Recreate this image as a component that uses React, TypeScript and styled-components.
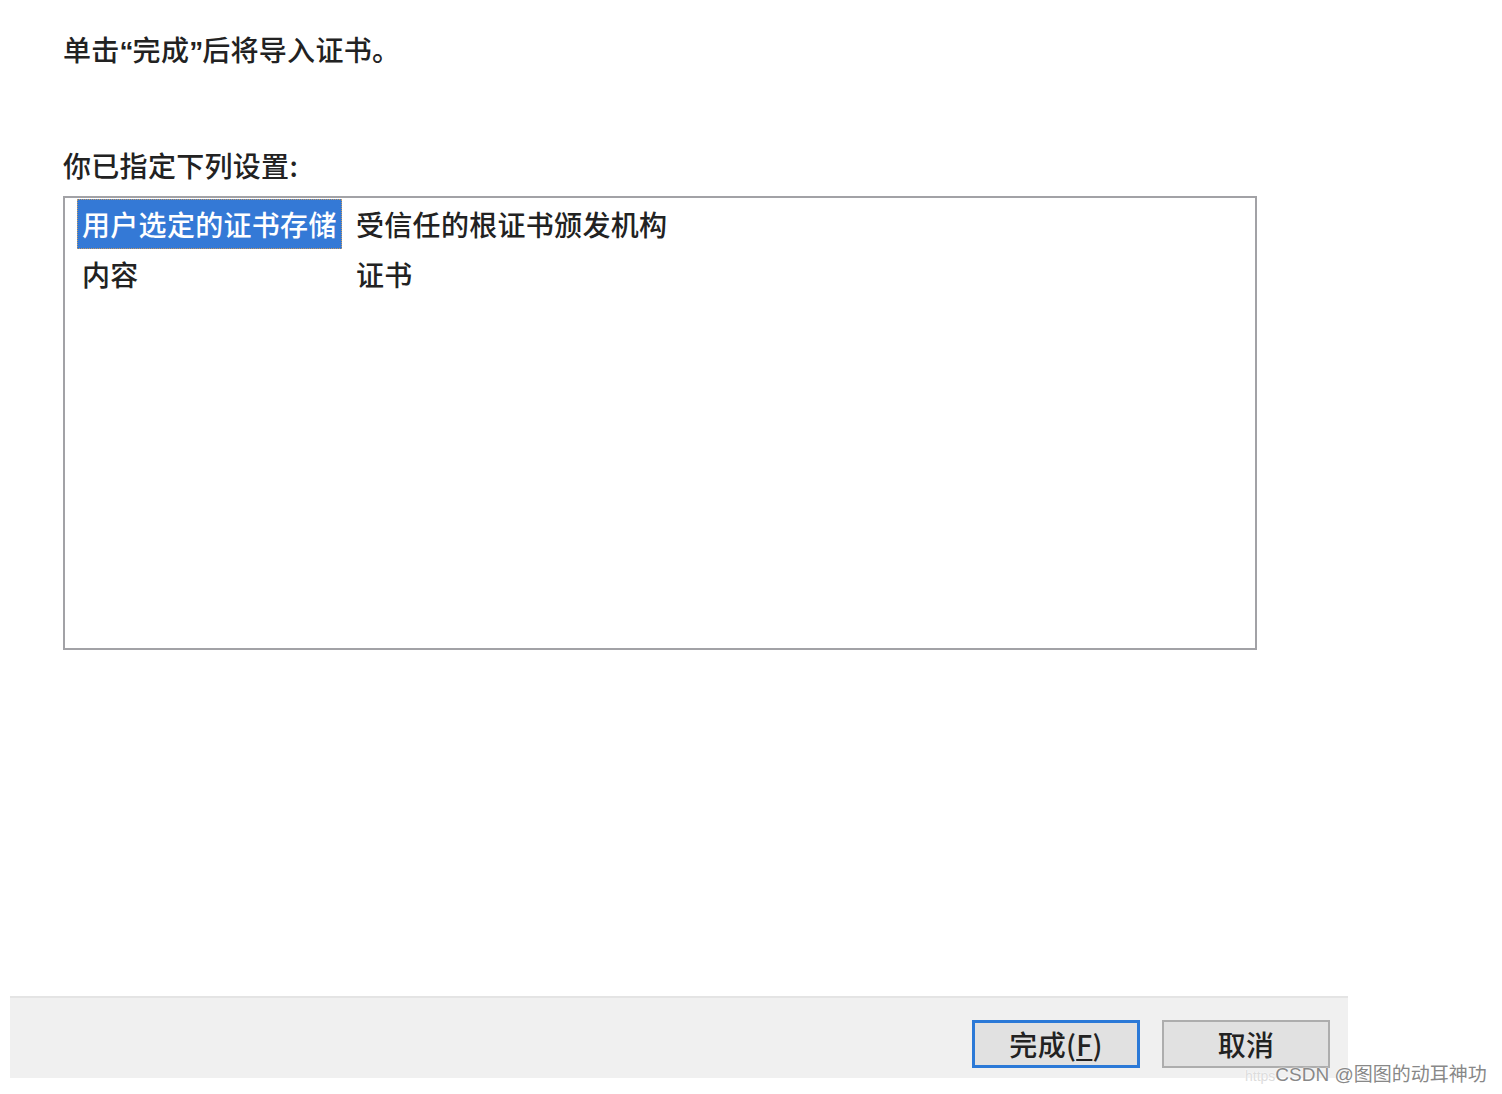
import React from "react";
import styled, { createGlobalStyle } from "styled-components";

const Global = createGlobalStyle`
  html, body {
    margin: 0;
    padding: 0;
    background: #ffffff;
  }
  body {
    font-family: "Noto Sans CJK SC", "Microsoft YaHei", "Liberation Sans", sans-serif;
    color: #1b1b1b;
  }
`;

const Page = styled.div`
  position: relative;
  width: 1502px;
  height: 1094px;
  overflow: hidden;
  background: #fff;
`;

const Dialog = styled.div`
  margin-left: 10px;
  width: 1338px;
  display: flex;
  flex-direction: column;
`;

const Content = styled.div`
  height: 996px;
  box-sizing: border-box;
  padding: 31px 0 0 53px;
  display: flex;
  flex-direction: column;
`;

const Text = styled.div<{ $top: number }>`
  margin-top: ${(p) => p.$top}px;
  height: 36px;
  font-size: 28px;
  font-weight: 500;
  line-height: 36px;
  letter-spacing: 0.3px;
  color: #222;
  white-space: nowrap;
`;

const Quote = styled.span`
  font-family: "Liberation Sans", sans-serif;
  font-weight: 700;
  letter-spacing: -1px;
  line-height: 1;
`;

const ListBox = styled.div`
  margin-top: 13px;
  width: 1194px;
  height: 454px;
  box-sizing: border-box;
  border: 2px solid #a2a2a6;
  background: #fff;
  padding: 1px 0 0 12px;
  display: grid;
  grid-template-columns: 265px auto;
  grid-auto-rows: 50px;
  column-gap: 14px;
  align-content: start;
`;

const Cell = styled.div<{ $selected?: boolean }>`
  display: flex;
  align-items: center;
  padding-left: 5px;
  box-sizing: border-box;
  font-size: 28px;
  font-weight: 500;
  letter-spacing: 0.3px;
  white-space: nowrap;
  color: ${(p) => (p.$selected ? "#ffffff" : "#222")};
  background: ${(p) => (p.$selected ? "#3479d6" : "transparent")};
  outline: ${(p) => (p.$selected ? "1px dotted #c69a62" : "none")};
  outline-offset: -1px;
`;

const ValueCell = styled(Cell)`
  padding-left: 0;
`;

const Footer = styled.div`
  height: 82px;
  box-sizing: border-box;
  border-top: 2px solid #e4e4e4;
  background: #f0f0f0;
  display: flex;
  justify-content: flex-end;
  align-items: flex-start;
  gap: 22px;
  padding: 22px 18px 0 0;
`;

const Button = styled.button<{ $default?: boolean }>`
  width: 168px;
  height: 48px;
  box-sizing: border-box;
  background: #e1e1e1;
  border: ${(p) => (p.$default ? "3px solid #2b79d7" : "2px solid #adadad")};
  font-family: "Noto Sans CJK SC", "Liberation Sans", sans-serif;
  font-size: 28px;
  font-weight: 500;
  color: #222;
  padding: 0;
  display: flex;
  align-items: center;
  justify-content: center;
  letter-spacing: 0.3px;
  u {
    text-decoration: underline;
    text-underline-offset: 3px;
  }
`;

const Watermark = styled.div`
  position: absolute;
  left: 1245px;
  top: 1062px;
  display: flex;
  align-items: baseline;
  font-family: "Liberation Sans", "Noto Sans CJK SC", sans-serif;
  font-size: 19px;
  line-height: 26px;
  white-space: nowrap;
  color: #888;
  text-shadow: 0 0 2px #fff, 0 0 1px #fff;
`;

const WatermarkUrl = styled.span`
  color: #dcdcdc;
  font-size: 14px;
  margin-right: 0;
`;

export default function App() {
  return (
    <Page>
      <Global />
      <Dialog>
        <Content>
          <Text $top={0}>
            单击<Quote>“</Quote>完成<Quote>”</Quote>后将导入证书。
          </Text>
          <Text $top={80}>你已指定下列设置:</Text>
          <ListBox>
            <Cell $selected>用户选定的证书存储</Cell>
            <ValueCell>受信任的根证书颁发机构</ValueCell>
            <Cell>内容</Cell>
            <ValueCell>证书</ValueCell>
          </ListBox>
        </Content>
        <Footer>
          <Button $default>
            完成(<u>F</u>)
          </Button>
          <Button>取消</Button>
        </Footer>
      </Dialog>
      <Watermark>
        <WatermarkUrl>https</WatermarkUrl>CSDN @图图的动耳神功
      </Watermark>
    </Page>
  );
}
